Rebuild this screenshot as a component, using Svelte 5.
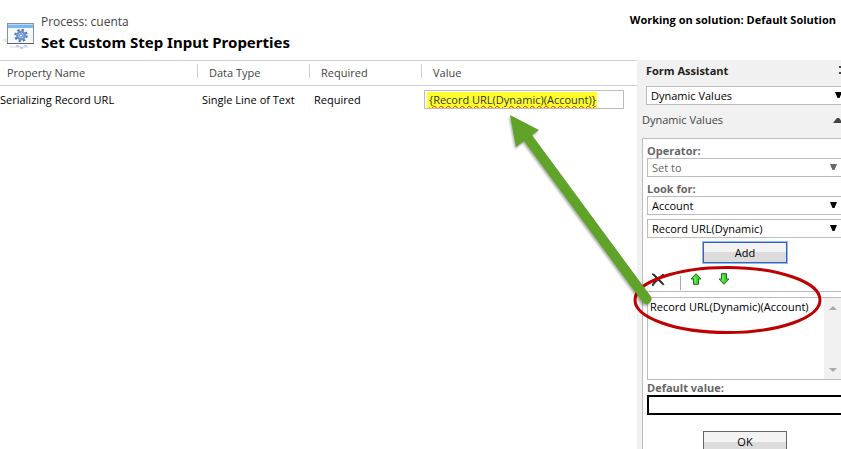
<script>
  const columns = ['Property Name', 'Data Type', 'Required', 'Value'];
  let value = $state('{Record URL(Dynamic)(Account)}');
  let fallback = $state('');
</script>

{#snippet caret(dim)}
  <svg class="caret" class:dim width="7" height="6" viewBox="0 0 7 6" aria-hidden="true">
    <path d="M0 0h7L4.500 6h-2z" />
  </svg>
{/snippet}

<div class="page">
  <header>
    <svg class="logo" width="36" height="28" viewBox="0 0 36 28" aria-hidden="true">
      <path d="M0 18l6-2v5zM7 24h21l-2 2H10z" fill="#e8e9ec" />
      <rect x="6.500" y="1.500" width="26" height="20" fill="#f7f8fa" stroke="#8a929d" />
      <path d="M7 2h25v4H7z" fill="#7db5ee" />
      <path d="M7 2h25v1H7z" fill="#b9dafa" />
      <path d="M6 21.500h27" stroke="#5c6068" />
      <circle cx="20" cy="13.500" r="5.600" fill="none" stroke="#4671b5" stroke-width="2.200" stroke-dasharray="2.200 2.198" />
      <circle cx="20" cy="13.500" r="3.700" fill="#d7e6f8" stroke="#6b94d2" stroke-width="2.400" />
      <circle cx="20" cy="13.500" r="1.600" fill="#fff" stroke="#3d68ad" stroke-width=".8" />
      <path d="M15 24h3m1 2h3m1-2h3" stroke="#b4c5df" stroke-width="1.500" />
    </svg>
    <div class="titles">
      <p>Process: cuenta</p>
      <h1>Set Custom Step Input Properties</h1>
    </div>
    <strong class="solution">Working on solution: Default Solution</strong>
  </header>

  <div class="body">
    <main>
      <table>
        <thead>
          <tr>
            {#each columns as c}<th><span>{c}</span></th>{/each}
          </tr>
        </thead>
        <tbody>
          <tr>
            <td>Serializing Record URL</td>
            <td>Single Line of Text</td>
            <td>Required</td>
            <td>
              <div class="value"><input aria-label="Value" spellcheck="false" bind:value /></div>
            </td>
          </tr>
        </tbody>
      </table>
    </main>

    <aside>
      <div class="assistant">
        <h2>Form Assistant</h2>
        <button class="expand" aria-label="Collapse Form Assistant">
          <svg width="8" height="8" viewBox="0 0 8 8"><path d="M0 0h3l2 3-2 1h2L3 8H0V6h2V2H0z" fill="#444" /></svg>
        </button>
      </div>
      <div class="pick wide">
        <select aria-label="Form Assistant"><option>Dynamic Values</option></select>
        {@render caret(false)}
      </div>
      <div class="section">
        <span>Dynamic Values</span>
        <svg width="10" height="5" viewBox="0 0 10 5" aria-hidden="true"><path d="M0 5l4-5h2l4 5z" fill="#444" /></svg>
      </div>

      <div class="box">
        <label for="operator">Operator:</label>
        <div class="pick">
          <select id="operator" disabled><option>Set to</option></select>
          {@render caret(true)}
        </div>
        <label for="entity">Look for:</label>
        <div class="pick">
          <select id="entity"><option>Account</option></select>
          {@render caret(false)}
        </div>
        <div class="pick second">
          <select aria-label="Look for field"><option>Record URL(Dynamic)</option></select>
          {@render caret(false)}
        </div>
        <button class="push focus">Add</button>

        <div class="tools">
          <button aria-label="Remove">
            <svg width="14" height="14" viewBox="0 0 14 14"><path d="M1 1l2 0 9 9 1 2-2-1-9-9zM12 1l1 1-9 8-2 3-1-1 2-3z" fill="#333" stroke="#333" stroke-width=".9" /></svg>
          </button>
          <i></i>
          <button aria-label="Move up">
            <svg width="12" height="12" viewBox="0 0 12 12"><path d="M6 .7L11 6H8.500v5.300h-5V6H1z" fill="#45d335" stroke="#167a16" /><path d="M5 4v6" stroke="#a1f28d" /></svg>
          </button>
          <button aria-label="Move down">
            <svg width="12" height="12" viewBox="0 0 12 12"><path d="M6 11.300L11 6H8.500V.7h-5V6H1z" fill="#45d335" stroke="#167a16" /><path d="M5 2v6" stroke="#a1f28d" /></svg>
          </button>
        </div>

        <div class="list">
          <select size="4" aria-label="Selected values"><option>Record URL(Dynamic)(Account)</option></select>
          <div class="bar" aria-hidden="true">
            <svg width="8" height="4" viewBox="0 0 8 4"><path d="M0 4l4-4 4 4z" /></svg>
            <svg width="8" height="4" viewBox="0 0 8 4"><path d="M0 0l4 4 4-4z" /></svg>
          </div>
        </div>

        <label for="fallback">Default value:</label>
        <input id="fallback" bind:value={fallback} />
        <button class="push ok">OK</button>
      </div>
    </aside>
  </div>

  <svg class="notes" width="841" height="449" viewBox="0 0 841 449" aria-hidden="true">
    <ellipse cx="727.500" cy="300" rx="92.500" ry="32.500" fill="none" stroke="#c00000" stroke-width="3" />
    <g class="arrow" fill="#5fa329">
      <path d="M528 138L646.500 299" stroke="#5fa329" stroke-width="10" stroke-linecap="round" />
      <path d="M510 115L539 130 516 147z" />
    </g>
  </svg>
</div>

<style>
  :global(body) { background: #fff; }
  .page, .page * { box-sizing: border-box; }
  .page {
    position: relative;
    display: flex;
    flex-direction: column;
    height: 100vh;
    overflow: hidden;
    font: 11px/16px "Open Sans", "Noto Sans", sans-serif;
    color: #000;
  }
  input, select, button { font: inherit; color: inherit; border-radius: 0; margin: 0; }
  p, h1, h2 { margin: 0; }
  header { display: flex; height: 60px; flex: none; padding: 12px 5px 0 1px; }
  .logo { flex: none; margin-top: 10px; }
  .titles { flex: 1; padding-left: 4px; white-space: nowrap; }
  .titles p { font-size: 12px; line-height: 20px; color: #444; }
  h1 { font-size: 15px; line-height: 20px; font-family: "Noto Sans", sans-serif; }
  .solution { white-space: nowrap; }
  .body { display: flex; flex: 1; min-height: 0; }
  main { flex: 1; min-width: 0; }
  table { width: 100%; table-layout: fixed; border-collapse: collapse; }
  th, td { padding: 0; text-align: left; font-weight: 400; white-space: nowrap; }
  th:nth-child(1) { width: 197px; }
  th:nth-child(2), th:nth-child(3) { width: 112px; }
  thead tr { height: 25px; border-top: 1px solid #d0d0d0; border-bottom: 1px solid #d0d0d0; }
  th { color: #444; vertical-align: top; }
  th span { display: block; height: 14px; margin-top: 3px; padding-left: 11px; line-height: 17px; border-left: 1px solid #d0d0d0; }
  th:first-child span { padding-left: 7px; border: 0; }
  td { height: 28px; padding-left: 5px; }
  td:first-child { padding-left: 0; }
  td:last-child { padding: 0 13px 0 3px; }
  .value { height: 19px; padding: 1px 2px 0; border: 1px solid #bcbcbc; }
  .value input {
    display: block;
    width: 170px;
    max-width: 100%;
    height: 16px;
    padding: 0 0 0 2px;
    border: 0;
    background: #ffff2b;
    color: #333;
    text-decoration: underline wavy #e02020 1px;
    text-underline-offset: 1px;
  }
  aside { width: 204px; flex: none; padding-left: 5px; background: #f1f1f1; overflow: hidden; }
  .assistant { display: flex; justify-content: space-between; height: 26px; padding: 3px 0 0 4px; }
  h2 { font-size: 11px; line-height: 16px; color: #222; }
  .expand { display: flex; align-items: center; width: 2px; height: 14px; padding: 0; border: 0; background: none; overflow: hidden; }
  .expand svg { flex: none; }
  .pick { position: relative; height: 19px; margin-right: -4px; }
  .pick select {
    display: block;
    appearance: none;
    width: 100%;
    height: 19px;
    padding: 0 16px 0 4px;
    border: 1px solid #bcbcbc;
    background: #fff;
    opacity: 1;
  }
  .pick select:disabled { color: #666; }
  .caret { position: absolute; right: 8px; top: 6px; fill: #000; }
  .caret.dim { fill: #666; }
  .wide { margin-left: 4px; }
  .wide .caret { right: 3px; }
  .section { display: flex; justify-content: space-between; align-items: center; height: 33px; padding-bottom: 3px; margin-right: -2px; color: #444; }
  .box { display: flex; flex-direction: column; min-height: 330px; padding: 4px 0 0 4px; background: #fff; border: 1px solid #bcbcbc; border-width: 1px 0 0 1px; }
  label { font-weight: 700; color: #666; height: 15px; }
  .pick + label { margin-top: 4px; }
  .second { margin-top: 4px; }
  .push {
    width: 84px;
    height: 21px;
    flex: none;
    margin: 4px 0 0 56px;
    padding: 0;
    border: 1px solid #666;
    background: linear-gradient(#f3f3f3 0 50%, #dcdcdc 50% 100%);
  }
  .focus { border-color: #3a62b0; outline: 1px solid #8fb8f0; }
  .tools { display: flex; align-items: flex-start; height: 29px; margin-left: -4px; padding: 10px 0 0 8px; border-bottom: 1px solid #bcbcbc; }
  .tools button { display: flex; padding: 0; border: 0; background: none; }
  .tools i { width: 1px; height: 14px; margin: 3px 9px 0 15px; background: #aaa; }
  .tools button + button { margin-left: 16px; }
  .list { display: flex; height: 83px; margin: 5px -4px 0 0; border: 1px solid #bcbcbc; }
  .list select { flex: 1; min-width: 0; height: 81px; padding: 0; border: 0; background: #fff; overflow: hidden; outline: 0; }
  .list option { min-height: 18px; padding: 1px 2px; }
  .bar { display: flex; flex-direction: column; justify-content: space-between; width: 20px; padding: 8px 0 7px 5px; background: #f1f1f1; fill: #aaa; }
  #fallback { width: 100%; height: 20px; border: 2px solid #000; border-right: 0; background: #fff; padding: 0 4px; }
  .ok { margin-top: 16px; }
  .notes { position: absolute; left: 0; top: 0; pointer-events: none; }
  .arrow { filter: drop-shadow(-1px 2px 1px #0005); }
</style>
